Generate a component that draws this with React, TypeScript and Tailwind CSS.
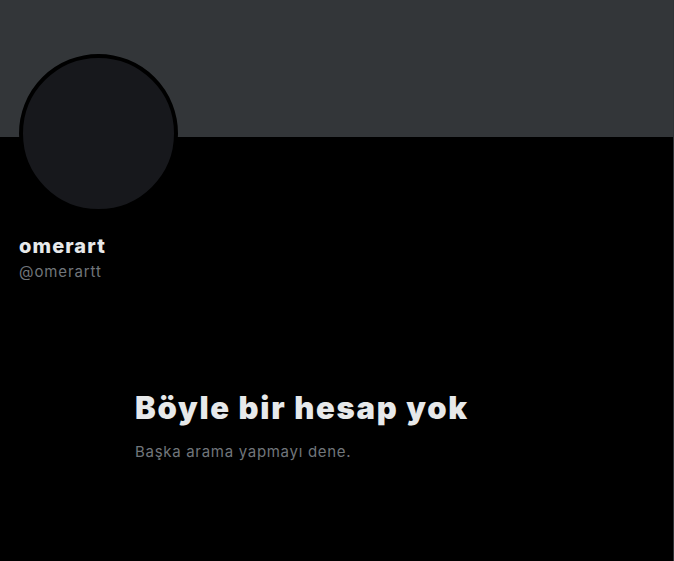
export default function App() {
  return (
    <div
      className="w-[674px] h-[561px] overflow-hidden bg-black border-r border-[#2f3336]"
      style={{ fontFamily: "Inter, 'Noto Sans', Arial, sans-serif" }}
    >
      {/* banner */}
      <div className="h-[137px] bg-[#333639]" />

      <div className="px-[19px]">
        <div className="-mt-[83px] w-[159px] h-[159px] rounded-full border-4 border-black bg-[#17181c]" />

        <div className="mt-[21px]">
          <div className="text-[20px] leading-[24px] font-extrabold text-[#e7e9ea] tracking-[1.1px]">omerart</div>
          <div className="mt-[4px] text-[15px] leading-[20px] text-[#71767b] tracking-[0.9px]">@omerartt</div>
        </div>
      </div>

      {/* empty state */}
      <div className="ml-[135px] mt-[108px] w-[420px]">
        <h2 className="text-[31px] leading-[36px] font-black text-[#e7e9ea] tracking-[1.7px]">Böyle bir hesap yok</h2>
        <p className="mt-[16px] text-[15px] leading-[20px] text-[#71767b] tracking-[0.7px]">Başka arama yapmayı dene.</p>
      </div>
    </div>
  );
}
